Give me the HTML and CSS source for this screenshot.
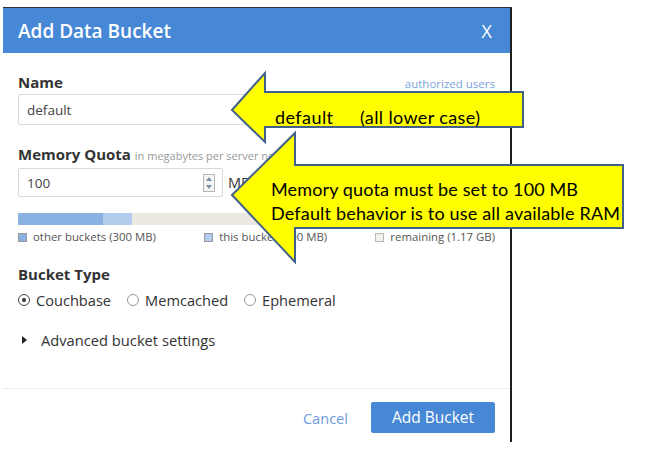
FILE: index.html
```html
<!DOCTYPE html>
<html>
<head>
<meta charset="utf-8">
<link rel="stylesheet" href="styles.css">
</head>
<body>
<div class="page">
  <div class="dialog">
    <div class="header">
      <h1 class="title">Add Data Bucket</h1>
      <span class="close">X</span>
    </div>
    <div class="body">
      <div class="label-row">
        <span class="label">Name</span>
        <span class="link">authorized users</span>
      </div>
      <div class="input input-full">default</div>

      <div class="label-row label-gap">
        <span class="label">Memory Quota <span class="hint">in megabytes per server node</span></span>
      </div>
      <div class="quota-row">
        <div class="input input-quota">
          <span>100</span>
          <span class="spinner"><span class="up"></span><span class="down"></span></span>
        </div>
        <span class="unit">MB</span>
      </div>

      <div class="bar">
        <div class="seg seg-other"></div>
        <div class="seg seg-this"></div>
      </div>
      <div class="legend">
        <span class="legend-item"><span class="sq sq-other"></span>other buckets (300 MB)</span>
        <span class="legend-item"><span class="sq sq-this"></span>this bucket (100 MB)</span>
        <span class="legend-item"><span class="sq sq-rem"></span>remaining (1.17 GB)</span>
      </div>

      <div class="label-row label-gap2">
        <span class="label">Bucket Type</span>
      </div>
      <div class="radios">
        <span class="radio-item"><span class="radio checked"></span>Couchbase</span>
        <span class="radio-item"><span class="radio"></span>Memcached</span>
        <span class="radio-item"><span class="radio"></span>Ephemeral</span>
      </div>

      <div class="advanced">
        <span class="caret"></span>Advanced bucket settings
      </div>
    </div>
    <div class="footer">
      <span class="cancel">Cancel</span>
      <span class="btn">Add Bucket</span>
    </div>
  </div>

  <svg class="callouts" width="658" height="476" viewBox="0 0 658 476">
    <polygon class="arrow" points="232,110 265,73 265,92 523,92 523,127 265,127 265,142"/>
    <text class="callout-text" x="275" y="124" textLength="58">default</text>
    <text class="callout-text" x="360" y="124" textLength="120">(all lower case)</text>
    <polygon class="arrow" points="232,195 295,133 295,165 623,165 623,228 295,228 295,262"/>
    <text class="callout-text" x="271" y="196" textLength="307">Memory quota must be set to 100 MB</text>
    <text class="callout-text" x="271" y="220" textLength="349">Default behavior is to use all available RAM</text>
  </svg>
</div>
</body>
</html>
```

FILE: styles.css
```css
html, body {
  margin: 0;
  padding: 0;
  background: #ffffff;
}

.page {
  position: relative;
  width: 658px;
  height: 476px;
  padding: 7px 0 0 3px;
  box-sizing: border-box;
  font-family: "Open Sans", "Liberation Sans", sans-serif;
  color: #333;
}

.dialog {
  width: 507px;
  background: #fff;
  border-top: 1px solid #2b3542;
  border-right: 2px solid #1e1e1e;
}

.header {
  height: 45px;
  background: #4688d6;
  display: flex;
  align-items: center;
  justify-content: space-between;
  padding: 0 18px 0 15px;
}

.title {
  margin: 0;
  font-size: 19px;
  font-weight: 600;
  color: #fff;
  line-height: 24px;
}

.close {
  color: #fff;
  font-size: 18px;
  line-height: 24px;
}

.body {
  padding: 19px 15px 38px 15px;
}

.label-row {
  display: flex;
  justify-content: space-between;
  align-items: baseline;
  height: 20px;
  line-height: 20px;
}

.label {
  font-size: 15px;
  font-weight: 700;
  color: #333;
}

.hint {
  font-size: 11px;
  font-weight: 400;
  color: #999;
}

.link {
  font-size: 11.5px;
  color: #7ca3dc;
}

.label-gap {
  margin-top: 19px;
}

.label-gap2 {
  margin-top: 19px;
}

.input {
  box-sizing: border-box;
  border: 1px solid #d9d9d9;
  border-radius: 2px;
  font-size: 13.5px;
  color: #444;
  padding: 0 8px;
  display: flex;
  align-items: center;
}

.input-full {
  margin-top: 2px;
  height: 31px;
}

.quota-row {
  margin-top: 4px;
  display: flex;
  align-items: center;
}

.input-quota {
  width: 205px;
  height: 29px;
  justify-content: space-between;
  padding-right: 7px;
}

.spinner {
  width: 12px;
  height: 18px;
  border: 1px solid #b8b8b8;
  box-sizing: border-box;
  display: flex;
  flex-direction: column;
  align-items: center;
  justify-content: space-around;
  background: #f4f4f4;
}

.spinner .up {
  width: 0;
  height: 0;
  border-left: 3px solid transparent;
  border-right: 3px solid transparent;
  border-bottom: 4px solid #7c8ea6;
}

.spinner .down {
  width: 0;
  height: 0;
  border-left: 3px solid transparent;
  border-right: 3px solid transparent;
  border-top: 4px solid #7c8ea6;
}

.unit {
  margin-left: 5px;
  font-size: 14.5px;
  color: #333;
}

.bar {
  margin-top: 16px;
  height: 12px;
  background: #ece9e2;
  display: flex;
}

.seg {
  height: 100%;
}

.seg-other {
  width: 85px;
  background: #89b1e2;
}

.seg-this {
  width: 29px;
  background: #b3cdef;
}

.legend {
  margin-top: 4px;
  height: 16px;
  line-height: 16px;
  display: flex;
  justify-content: space-between;
  font-size: 11.4px;
  color: #555;
}

.legend-item {
  display: flex;
  align-items: center;
}

.sq {
  width: 9px;
  height: 9px;
  box-sizing: border-box;
  border: 1px solid #9a9a9a;
  margin-right: 6px;
}

.sq-other {
  background: #89b1e2;
}

.sq-this {
  background: #b3cdef;
}

.sq-rem {
  background: #f3f1ec;
  border-color: #b8b8b8;
}

.radios {
  margin-top: 6px;
  height: 20px;
  display: flex;
  align-items: center;
  gap: 16px;
  font-size: 14.6px;
  color: #333;
}

.radio-item {
  display: flex;
  align-items: center;
}

.radio {
  width: 12px;
  height: 12px;
  box-sizing: border-box;
  border: 1px solid #999;
  border-radius: 50%;
  margin-right: 6px;
  position: relative;
}

.radio.checked {
  border: 1.5px solid #444;
}

.radio.checked::after {
  content: "";
  position: absolute;
  left: 2.5px;
  top: 2.5px;
  width: 4px;
  height: 4px;
  border-radius: 50%;
  background: #333;
}

.advanced {
  margin-top: 20px;
  height: 20px;
  display: flex;
  align-items: center;
  font-size: 14.7px;
  color: #333;
  padding-left: 4px;
}

.caret {
  width: 0;
  height: 0;
  border-top: 4px solid transparent;
  border-bottom: 4px solid transparent;
  border-left: 5px solid #222;
  margin-right: 14px;
}

.footer {
  border-top: 1px solid #eeeeee;
  height: 54px;
  box-sizing: border-box;
  padding: 13px 15px 0 0;
  display: flex;
  justify-content: flex-end;
  align-items: flex-start;
}

.cancel {
  font-size: 14.6px;
  color: #6c9be0;
  line-height: 33px;
  margin-right: 23px;
}

.btn {
  width: 124px;
  height: 31px;
  line-height: 31px;
  text-align: center;
  background: #4688d6;
  color: #fff;
  font-size: 15.5px;
  border-radius: 2px;
}

.callouts {
  position: absolute;
  left: 0;
  top: 0;
  pointer-events: none;
}

.arrow {
  fill: #ffff00;
  stroke: #41618a;
  stroke-width: 2;
  stroke-linejoin: miter;
}

.callout-text {
  font-family: Lato, "Liberation Sans", sans-serif;
  font-size: 18px;
  fill: #000;
}
```
